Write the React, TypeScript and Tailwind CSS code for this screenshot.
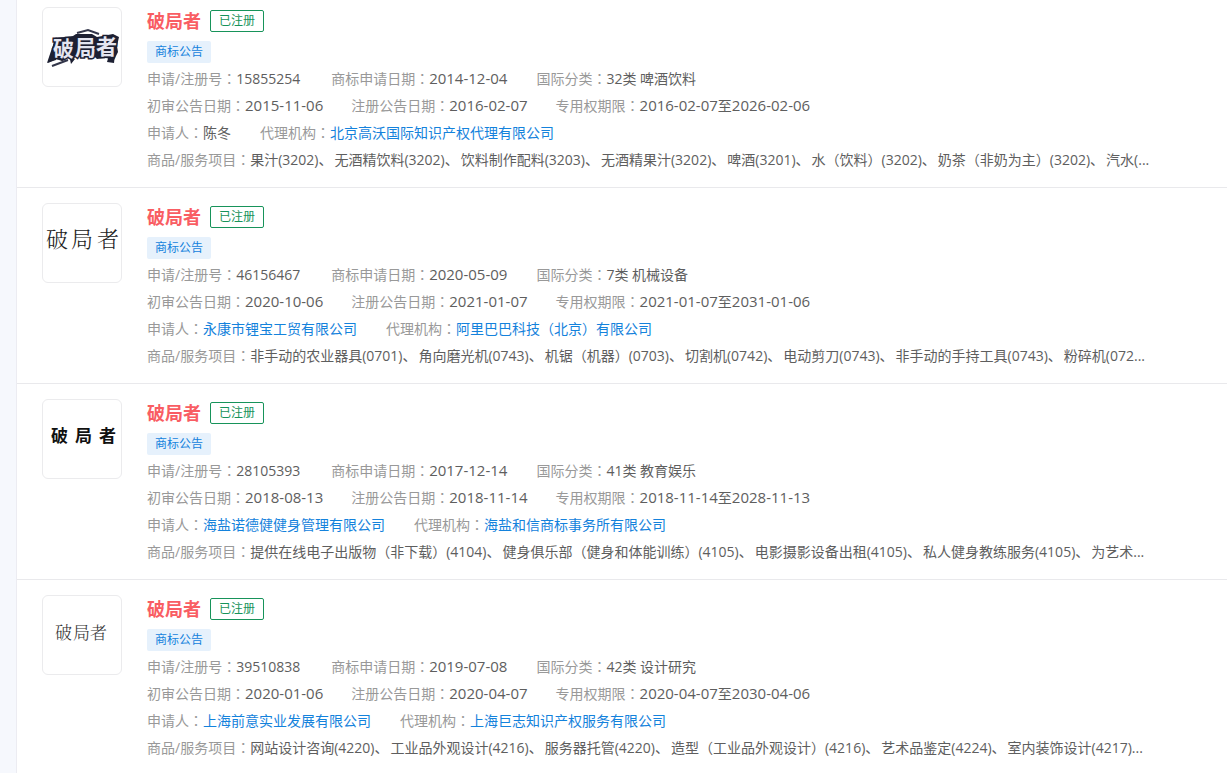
import React from "react";

type Mark = {
  number: string;
  applied: string;
  category: string;
  preliminary: string;
  registered: string;
  until: string;
  applicant: string;
  applicantLinked: boolean;
  agency: string;
  goods: string[];
};

const marks: Mark[] = [
  {
    number: "15855254",
    applied: "2014-12-04",
    category: "32类 啤酒饮料",
    preliminary: "2015-11-06",
    registered: "2016-02-07",
    until: "2026-02-06",
    applicant: "陈冬",
    applicantLinked: false,
    agency: "北京高沃国际知识产权代理有限公司",
    goods: ["果汁(3202)、", "无酒精饮料(3202)、", "饮料制作配料(3203)、", "无酒精果汁(3202)、", "啤酒(3201)、", "水（饮料）(3202)、", "奶茶（非奶为主）(3202)、", "汽水(..."],
  },
  {
    number: "46156467",
    applied: "2020-05-09",
    category: "7类 机械设备",
    preliminary: "2020-10-06",
    registered: "2021-01-07",
    until: "2031-01-06",
    applicant: "永康市锂宝工贸有限公司",
    applicantLinked: true,
    agency: "阿里巴巴科技（北京）有限公司",
    goods: ["非手动的农业器具(0701)、", "角向磨光机(0743)、", "机锯（机器）(0703)、", "切割机(0742)、", "电动剪刀(0743)、", "非手动的手持工具(0743)、", "粉碎机(072..."],
  },
  {
    number: "28105393",
    applied: "2017-12-14",
    category: "41类 教育娱乐",
    preliminary: "2018-08-13",
    registered: "2018-11-14",
    until: "2028-11-13",
    applicant: "海盐诺德健健身管理有限公司",
    applicantLinked: true,
    agency: "海盐和信商标事务所有限公司",
    goods: ["提供在线电子出版物（非下载）(4104)、", "健身俱乐部（健身和体能训练）(4105)、", "电影摄影设备出租(4105)、", "私人健身教练服务(4105)、", "为艺术..."],
  },
  {
    number: "39510838",
    applied: "2019-07-08",
    category: "42类 设计研究",
    preliminary: "2020-01-06",
    registered: "2020-04-07",
    until: "2030-04-06",
    applicant: "上海前意实业发展有限公司",
    applicantLinked: true,
    agency: "上海巨志知识产权服务有限公司",
    goods: ["网站设计咨询(4220)、", "工业品外观设计(4216)、", "服务器托管(4220)、", "造型（工业品外观设计）(4216)、", "艺术品鉴定(4224)、", "室内装饰设计(4217)..."],
  },
];

/* Full-width colons and brackets are centred in their cell. */
function Zh({ children }: { children: string }) {
  return (
    <>
      {children.split(/([：（）])/).map((part, i) =>
        /[：（）]/.test(part) ? (
          <span key={i} className="font-['Noto_Sans_CJK_TC',sans-serif]">{part}</span>
        ) : (
          part
        ),
      )}
    </>
  );
}

function Field({ label, children }: { label: string; children: React.ReactNode }) {
  return (
    <div className="flex h-[27px] shrink-0 whitespace-nowrap">
      <dt className="text-[#999999]"><Zh>{`${label}：`}</Zh></dt>
      <dd className="text-[#5e5e5e]">{children}</dd>
    </div>
  );
}

function DateText({ value }: { value: string }) {
  return <time dateTime={value} className="text-[15px] leading-none">{value}</time>;
}

function Company({ name }: { name: string }) {
  return <a href="#" className="text-[#1482dc] hover:underline"><Zh>{name}</Zh></a>;
}

function Logo({ index }: { index: number }) {
  return (
    <svg viewBox="0 0 78 78" className="size-[78px]" role="img" aria-label="破局者">
      {index === 0 && (
        <>
          <path
            d="M12 30l18-2 3-2 16 0 5 3 16-3 6 3-2 9 1 6-4 8-8-2-9 1-3-3-19 1-4 3-3-2-6 3-6-2-8 4 3-9z"
            fill="#1d2033"
          />
          <path d="M13 29l-4 11-5 15 9-3 4-14zM72 46l-1 9-7-1 2-7zM26 47l2 9 4-5z" fill="#1d2033" />
          <path d="M34 25l11-3 11 4M9 58l16-6" fill="none" stroke="#33364a" strokeWidth="2" />
          <g
            fill="#e4e5f0"
            stroke="#1d2033"
            strokeWidth="3"
            paintOrder="stroke"
            strokeLinejoin="miter"
            fontSize="21"
            className="font-['Noto_Sans_CJK_SC',sans-serif] font-bold"
          >
            <text x="10" y="48">破</text>
            <text x="32" y="47">局</text>
            <text x="53" y="46">者</text>
          </g>
        </>
      )}
      {index === 1 && (
        <text x="3 28 54" y="43" fontSize="22" fill="#222222" className="font-['Noto_Serif_CJK_SC','Noto_Sans_CJK_SC',serif] font-light">破局者</text>
      )}
      {index === 2 && (
        <text x="8 32 56" y="42" fontSize="17" fill="#111111" className="font-['Noto_Sans_CJK_SC',sans-serif] font-bold">破局者</text>
      )}
      {index === 3 && (
        <text x="12 30 47" y="43" fontSize="17" fill="#333333" className="font-['Noto_Serif_CJK_SC','Noto_Sans_CJK_SC',serif] font-light">破局者</text>
      )}
    </svg>
  );
}

function MarkCard({ mark, index }: { mark: Mark; index: number }) {
  return (
    <li className="flex items-start gap-[25px] border-b border-[#e9e9ec] pt-[15px] pr-6 pb-3.5 pl-[25px] first:pt-[7px] last:border-b-0 last:pb-0">
      <div className="size-20 shrink-0 rounded-md border border-[#ebebed]">
        <Logo index={index} />
      </div>
      <div className="min-w-0 flex-1">
        <div className="flex h-7 items-center gap-[9px]">
          <h2 className="text-lg font-bold text-[#f95d63]">破局者</h2>
          <span className="flex h-[22px] items-center rounded-xs border border-[#17935a] px-2 text-xs text-[#17935a]">已注册</span>
        </div>
        <div className="mt-1.5 mb-0.5 flex">
          <span className="flex h-[22px] items-center rounded-xs bg-[#e6f1fc] px-2 text-xs text-[#1482dc]">商标公告</span>
        </div>
        <dl className="text-sm leading-[27px]">
          <div className="flex gap-[29px]">
            <Field label="申请/注册号"><span className="inline-block min-w-[66px]">{mark.number}</span></Field>
            <Field label="商标申请日期"><DateText value={mark.applied} /></Field>
            <Field label="国际分类">{mark.category}</Field>
          </div>
          <div className="flex gap-7">
            <Field label="初审公告日期"><DateText value={mark.preliminary} /></Field>
            <Field label="注册公告日期"><DateText value={mark.registered} /></Field>
            <Field label="专用权期限"><DateText value={mark.registered} />至<DateText value={mark.until} /></Field>
          </div>
          <div className="flex gap-[29px]">
            <Field label="申请人">
              {mark.applicantLinked ? <Company name={mark.applicant} /> : mark.applicant}
            </Field>
            <Field label="代理机构"><Company name={mark.agency} /></Field>
          </div>
          <Field label="商品/服务项目">
            {mark.goods.map((item) => (
              <span key={item} className="mr-0.5"><Zh>{item}</Zh></span>
            ))}
          </Field>
        </dl>
      </div>
    </li>
  );
}

export default function App() {
  return (
    <div className="flex min-h-screen bg-[#f6f8fd] pl-4 font-['Open_Sans','Noto_Sans_CJK_SC',sans-serif]">
      <main className="min-w-0 flex-1 overflow-hidden border-l border-[#ececf2] bg-white">
        <ul>
          {marks.map((mark, index) => (
            <MarkCard key={mark.number} mark={mark} index={index} />
          ))}
        </ul>
      </main>
    </div>
  );
}
